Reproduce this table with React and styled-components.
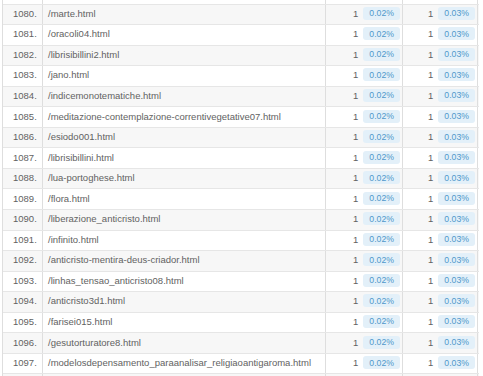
import React from "react";
import styled, { createGlobalStyle } from "styled-components";

const Global = createGlobalStyle`
  html, body { margin: 0; padding: 0; background: #fff; }
  body { font-family: "Liberation Sans", Arial, sans-serif; }
`;

const Table = styled.div`
  margin-left: 2px;
  width: 476px;
  border-left: 1px solid #dedede;
  display: flex;
  flex-direction: column;
`;

const Row = styled.div`
  display: grid;
  grid-template-columns: 40px 283px 77px 75px;
  height: ${(p) => p.$h || 20.55}px;
  box-sizing: border-box;
  border-bottom: ${(p) => (p.$noLine ? "none" : "1px solid #e6e6e6")};
  background: ${(p) => (p.$alt ? "#f7f7f7" : "#ffffff")};
`;

const Cell = styled.div`
  box-sizing: border-box;
  border-right: 1px solid #dedede;
  display: flex;
  align-items: center;
  overflow: hidden;
  white-space: nowrap;
  font-size: 9.5px;
  color: #626262;
  justify-content: ${(p) => (p.$right ? "flex-end" : "flex-start")};
  padding: ${(p) => p.$pad || "0"};
  padding-bottom: 2px;
  gap: 5px;
`;

const Badge = styled.span`
  display: inline-flex;
  align-items: center;
  height: 13px;
  padding: 0 6px;
  border-radius: 3px;
  background: #e3f0f9;
  color: #4f98cb;
  font-size: 8.7px;
`;

const pages = [
  "/marte.html",
  "/oracoli04.html",
  "/librisibillini2.html",
  "/jano.html",
  "/indicemonotematiche.html",
  "/meditazione-contemplazione-correntivegetative07.html",
  "/esiodo001.html",
  "/librisibillini.html",
  "/lua-portoghese.html",
  "/flora.html",
  "/liberazione_anticristo.html",
  "/infinito.html",
  "/anticristo-mentira-deus-criador.html",
  "/linhas_tensao_anticristo08.html",
  "/anticristo3d1.html",
  "/farisei015.html",
  "/gesutorturatore8.html",
  "/modelosdepensamento_paraanalisar_religiaoantigaroma.html",
];

const EmptyCells = () => (
  <>
    <Cell />
    <Cell />
    <Cell />
    <Cell />
  </>
);

export default function App() {
  return (
    <>
      <Global />
      <Table>
        <Row $h={4.5}>
          <EmptyCells />
        </Row>
        {pages.map((p, i) => (
          <Row key={p} $alt={i % 2 === 0}>
            <Cell $pad="0 0 0 10px">{1080 + i}.</Cell>
            <Cell $pad="0 0 0 5px">{p}</Cell>
            <Cell $right $pad="0 2px 0 0">
              1<Badge>0.02%</Badge>
            </Cell>
            <Cell $right $pad="0 2px 0 0">
              1<Badge>0.03%</Badge>
            </Cell>
          </Row>
        ))}
        <Row $h={4} $alt $noLine>
          <EmptyCells />
        </Row>
      </Table>
    </>
  );
}
